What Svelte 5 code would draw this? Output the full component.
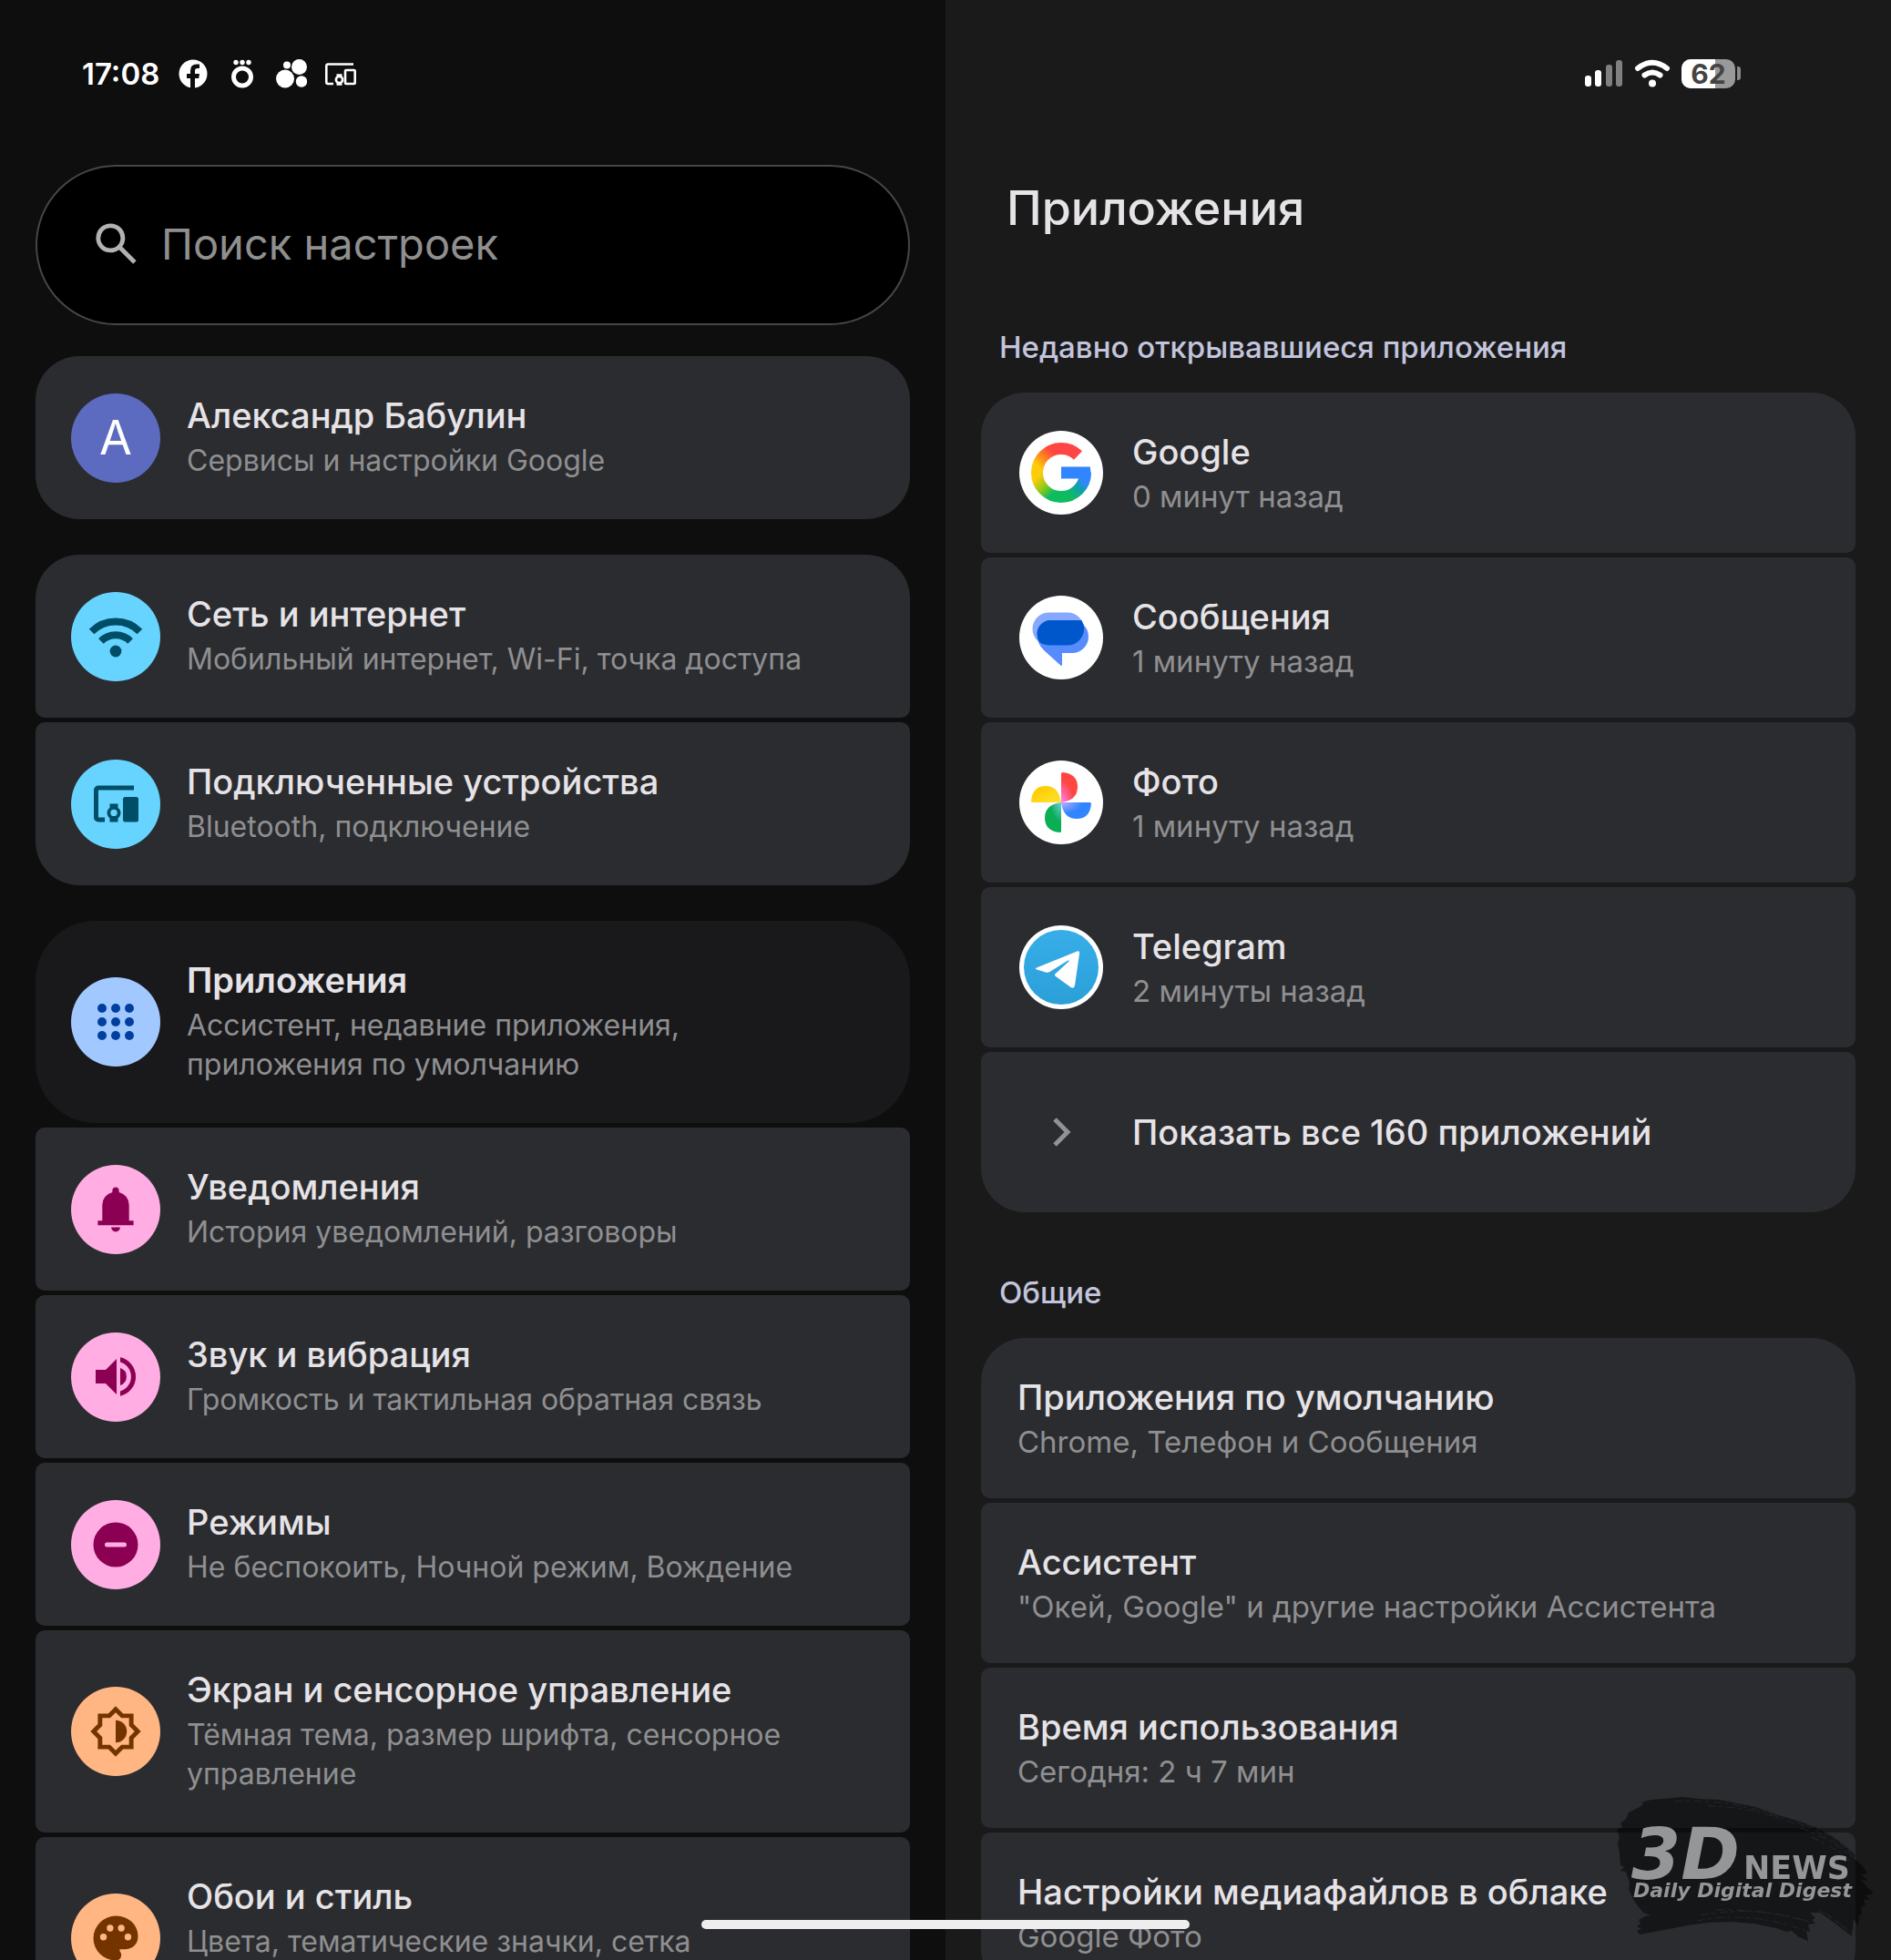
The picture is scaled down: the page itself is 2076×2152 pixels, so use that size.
<script>
  const groups = [
    [{ icon: 'avatar', title: 'Александр Бабулин', sub: 'Сервисы и настройки Google' }],
    [
      { icon: 'wifi', title: 'Сеть и интернет', sub: 'Мобильный интернет, Wi-Fi, точка доступа' },
      { icon: 'devices', title: 'Подключенные устройства', sub: 'Bluetooth, подключение' },
    ],
    [
      { icon: 'apps', title: 'Приложения', sub: 'Ассистент, недавние приложения, приложения по умолчанию', selected: true },
      { icon: 'bell', title: 'Уведомления', sub: 'История уведомлений, разговоры' },
      { icon: 'sound', title: 'Звук и вибрация', sub: 'Громкость и тактильная обратная связь' },
      { icon: 'modes', title: 'Режимы', sub: 'Не беспокоить, Ночной режим, Вождение' },
      { icon: 'display', title: 'Экран и сенсорное управление', sub: 'Тёмная тема, размер шрифта, сенсорное управление' },
      { icon: 'palette', title: 'Обои и стиль', sub: 'Цвета, тематические значки, сетка', tall: true },
    ],
  ]

  const recent = [
    { icon: 'google', title: 'Google', sub: '0 минут назад' },
    { icon: 'messages', title: 'Сообщения', sub: '1 минуту назад' },
    { icon: 'photos', title: 'Фото', sub: '1 минуту назад' },
    { icon: 'telegram', title: 'Telegram', sub: '2 минуты назад' },
  ]

  const general = [
    { title: 'Приложения по умолчанию', sub: 'Chrome, Телефон и Сообщения' },
    { title: 'Ассистент', sub: '"Окей, Google" и другие настройки Ассистента' },
    { title: 'Время использования', sub: 'Сегодня: 2 ч 7 мин' },
    { title: 'Настройки медиафайлов в облаке', sub: 'Google Фото' },
  ]

  const dots = [34, 49, 64]
  const battery = 62

  let query = $state('')
</script>

{#snippet settingIcon(name)}
  <span class="badge {name}">
    {#if name === 'avatar'}
      A
    {:else}
      <svg viewBox="0 0 98 98" aria-hidden="true">
        {#if name === 'wifi'}
          <path d="M22.6 43.5A37.2 37.2 0 0 1 75.4 43.5M32.9 54A22.7 22.7 0 0 1 65.1 54" fill="none" stroke="currentColor" stroke-width="8" />
          <circle cx="49" cy="65" r="6.4" />
        {:else if name === 'devices'}
          <path d="M69 31H30a2.500 2.500 0 0 0-2.500 2.500v30A2.500 2.500 0 0 0 30 66h7" fill="none" stroke="currentColor" stroke-width="5" />
          <rect x="57" y="41" width="17" height="27.500" rx="2.500" />
          <path fill-rule="evenodd" d="M42.500 48.500h9v4.200a7.200 7.200 0 0 1 0 11.600v4.200h-9v-4.200a7.200 7.200 0 0 1 0-11.600zM47 54.700a3.700 3.700 0 1 0 0 7.400 3.700 3.700 0 0 0 0-7.400z" />
        {:else if name === 'apps'}
          {#each dots as cy}
            {#each dots as cx}
              <circle {cx} {cy} r="5" />
            {/each}
          {/each}
        {:else if name === 'bell'}
          <path transform="translate(19.600 19.600) scale(2.450)" d="M4 19v-2h2v-7q0-2.075 1.250-3.687T10.500 4.200v-.7q0-.625.438-1.062T12 2t1.063.438T13.500 3.500v.7q2 .5 3.250 2.113T18 10v7h2v2zm8 3q-.825 0-1.412-.587T10 20h4q0 .825-.587 1.413T12 22" />
        {:else if name === 'sound'}
          <path d="M27 41h11l12-12v39L38 56H27zM54 39a10 10 0 0 1 0 19z" />
          <path d="M54 27.300A21.700 21.700 0 0 1 54 69.700V64.500A16.700 16.700 0 0 0 54 32.500z" />
        {:else if name === 'modes'}
          <path fill-rule="evenodd" d="M49 24.500a24.500 24.500 0 1 0 0 49 24.500 24.500 0 0 0 0-49zM39.500 46.500h19a2.500 2.500 0 0 1 0 5h-19a2.500 2.500 0 0 1 0-5z" />
        {:else if name === 'display'}
          <g transform="translate(19.600 19.600) scale(2.450)">
            <path fill-rule="evenodd" d="M12 23.300 8.650 20H4v-4.650L.7 12 4 8.650V4h4.650L12 .7 15.350 4H20v4.650L23.300 12 20 15.350V20h-4.650zM12 20.500l2.500-2.500H18v-3.500l2.500-2.500L18 9.500V6h-3.500L12 3.500 9.500 6H6v3.500L3.500 12 6 14.500V18h3.500z" />
            <path d="M12 17a5 5 0 0 0 0-10z" />
          </g>
        {:else if name === 'palette'}
          <g transform="translate(19.600 19.600) scale(2.450)">
            <path d="M12 22q-2.050 0-3.875-.788t-3.187-2.150-2.150-3.187T2 12q0-2.075.813-3.900t2.200-3.175T8.250 2.788 12.200 2q2 0 3.775.688t3.113 1.900 2.125 2.875T22 11.050q0 2.875-1.750 4.413T16 17h-1.850q-.225 0-.312.125t-.088.275q0 .3.375.863t.375 1.287q0 1.250-.687 1.850T12 22" />
            <g class="holes">
              <circle cx="6.500" cy="11.500" r="1.500" />
              <circle cx="9.500" cy="7.500" r="1.500" />
              <circle cx="14.500" cy="7.500" r="1.500" />
              <circle cx="17.500" cy="11.500" r="1.500" />
            </g>
          </g>
        {/if}
      </svg>
    {/if}
  </span>
{/snippet}

{#snippet appIcon(name)}
  <svg class="app-icon" viewBox="0 0 92 92" aria-hidden="true">
    {#if name !== 'more'}
      <circle cx="46" cy="46" r="46" fill="#fff" />
    {/if}
    {#if name === 'google'}
      <defs>
        <linearGradient id="g-ry" x1="1" y1="0" x2="0" y2="1">
          <stop offset="0.25" stop-color="#ff4641" />
          <stop offset="0.5" stop-color="#ff7a27" />
          <stop offset="0.85" stop-color="#ffcc0a" />
        </linearGradient>
        <linearGradient id="g-yg" x1="0" y1="0" x2="1" y2="1">
          <stop offset="0.1" stop-color="#ffcc0a" />
          <stop offset="0.45" stop-color="#8fc916" />
          <stop offset="0.75" stop-color="#0ebc5f" />
        </linearGradient>
        <linearGradient id="g-gb" x1="0" y1="1" x2="1" y2="0">
          <stop offset="0.2" stop-color="#0ebc5f" />
          <stop offset="0.55" stop-color="#12a0a8" />
          <stop offset="0.8" stop-color="#3186ff" />
        </linearGradient>
      </defs>
      <g fill="none" stroke-width="13">
        <path d="M46 19.500A26.500 26.500 0 0 0 19.500 46" stroke="url(#g-ry)" />
        <path d="M19.500 46A26.500 26.500 0 0 0 46 72.500" stroke="url(#g-yg)" />
        <path d="M46 72.500A26.500 26.500 0 0 0 72.500 46" stroke="url(#g-gb)" />
        <path d="M64.500 27A26.500 26.500 0 0 0 45.800 19.500" stroke="#ff4647" />
      </g>
      <path d="M46 39.500h31.800q1.600 6.500-.1 13H46z" fill="#3186ff" />
    {:else if name === 'messages'}
      <path d="M32.500 18.500H53a18 18 0 0 1 0 36H32.500a18 18 0 0 1 0-36z" fill="#86a9ff" />
      <path d="M34 27h24a18 18 0 0 1 0 36H47v12.500q0 2.500-2 .8L27 60q-7.500-7-7.500-18A15 15 0 0 1 34 27z" fill="#578cff" />
      <path d="M34 27h34.300A18 18 0 0 1 53 54.500H32.500Q26 54 22 51q-2.500-4-2.500-9A15 15 0 0 1 34 27z" fill="#0057cc" />
    {:else if name === 'photos'}
      <defs>
        <radialGradient id="p-r" cx="0" cy="1" r="1">
          <stop offset="0.1" stop-color="#ff7ae0" />
          <stop offset="0.75" stop-color="#ff4641" />
        </radialGradient>
        <linearGradient id="p-y" x1="0" y1="0" x2="1" y2="1">
          <stop offset="0.2" stop-color="#fc0" />
          <stop offset="1" stop-color="#ffe335" />
        </linearGradient>
        <radialGradient id="p-b" cx="0" cy="0" r="1">
          <stop offset="0.1" stop-color="#a9a8ff" />
          <stop offset="0.7" stop-color="#3186ff" />
        </radialGradient>
        <radialGradient id="p-g" cx="1" cy="0" r="1">
          <stop offset="0.1" stop-color="#63c9cf" />
          <stop offset="0.65" stop-color="#0aae54" />
        </radialGradient>
      </defs>
      <path d="M46 46V14.500q0-1.500 1.500-1.500Q64 14.500 64 29T46 46z" fill="url(#p-r)" />
      <path d="M46 46H14.500q-1.500 0-1.500-1.500Q14.500 28 29 28T46 46z" fill="url(#p-y)" />
      <path d="M46 46h31.500q1.500 0 1.500 1.500Q77.500 64 63 64T46 46z" fill="url(#p-b)" />
      <path d="M46 46v31.500q0 1.500-1.500 1.500Q28 77.500 28 63T46 46z" fill="url(#p-g)" />
    {:else if name === 'telegram'}
      <defs>
        <linearGradient id="t-b" x1="0" y1="0" x2="0" y2="1">
          <stop offset="0" stop-color="#38aee9" />
          <stop offset="1" stop-color="#2a9fd8" />
        </linearGradient>
      </defs>
      <circle cx="46" cy="46" r="41" fill="url(#t-b)" />
      <path d="M19 46.500 63.500 28.500q3-1 2.500 2.500L61 66q-1 4-4.500 2L40 56q-2-1.500-.2-3L54.500 39.500q.8-1.700-1.500-.8L33.500 51q-2 1.200-4.500.5L19 48.500q-2-1 0-2z" fill="#fff" />
    {:else}
      <path d="M39 32l14 14-14 14" fill="none" stroke="#929294" stroke-width="5" />
    {/if}
  </svg>
{/snippet}

{#snippet labels(item)}
  <span class="text">
    <span class="title">{item.title}</span>
    {#if item.sub}<span class="sub">{item.sub}</span>{/if}
  </span>
{/snippet}

<main class="screen">
  <section class="pane list-pane">
    <div class="status">
      <span class="time">17:08</span>
      <svg class="status-icon" viewBox="0 0 34 34" aria-hidden="true">
        <circle cx="17" cy="17" r="15.500" fill="#fff" />
        <path d="M14 34V22h-4v-5h4v-3.500q0-7 7-7h3V11h-2.200q-2.800 0-2.800 2.800V17h5l-.8 5H19v12z" fill="#0e0e0e" />
      </svg>
      <svg class="status-icon" viewBox="0 0 34 34" fill="#fff" aria-hidden="true">
        <circle cx="17" cy="20.500" r="9.500" fill="none" stroke="#fff" stroke-width="5" />
        <circle cx="10" cy="4.500" r="2.700" />
        <circle cx="17" cy="4.500" r="2.700" />
        <circle cx="24" cy="4.500" r="2.700" />
      </svg>
      <svg class="status-icon" viewBox="0 0 34 34" fill="#fff" aria-hidden="true">
        <circle cx="10" cy="22.500" r="10" />
        <circle cx="25.500" cy="9.500" r="8.500" />
        <circle cx="12" cy="7.500" r="4" />
        <circle cx="28" cy="25.500" r="6.200" />
      </svg>
      <svg class="status-icon" viewBox="0 0 34 34" fill="none" stroke="#fff" stroke-width="2.600" aria-hidden="true">
        <path d="M31 6.500H3Q1.300 6.500 1.300 8.500V26q0 2 1.700 2h6" />
        <rect x="22" y="13" width="10.700" height="15" rx="1" />
        <circle cx="15.500" cy="23.500" r="3.600" />
        <path d="M12.500 18.500h6M12.500 28.500h6" />
      </svg>
    </div>

    <label class="search">
      <svg viewBox="0 0 24 24" aria-hidden="true">
        <path d="m19.600 21-6.300-6.300q-.75.6-1.725.95T9.500 16q-2.725 0-4.612-1.888T3 9.500t1.888-4.612T9.500 3t4.613 1.888T16 9.500q0 1.100-.35 2.075T14.700 13.300l6.300 6.300zM9.500 14q1.875 0 3.188-1.312T14 9.500t-1.312-3.187T9.500 5 6.313 6.313 5 9.500t1.313 3.188T9.500 14" />
      </svg>
      <input type="text" placeholder="Поиск настроек" aria-label="Поиск настроек" bind:value={query} />
    </label>

    <nav class="groups">
      {#each groups as group}
        <div class="group">
          {#each group as item}
            <button class="row" class:selected={item.selected} class:tall={item.tall} aria-current={item.selected ? 'page' : undefined}>
              {@render settingIcon(item.icon)}
              {@render labels(item)}
            </button>
          {/each}
        </div>
      {/each}
    </nav>
  </section>

  <section class="pane detail-pane">
    <div class="status end">
      <svg class="signal" viewBox="0 0 42 34" aria-hidden="true">
        <g fill="#fff">
          <rect x="0" y="19" width="7" height="12" rx="3" />
          <rect x="11" y="13" width="7" height="18" rx="3" />
        </g>
        <g fill="#808080">
          <rect x="23" y="7" width="7" height="24" rx="3" />
          <rect x="34" y="2" width="7" height="29" rx="3" />
        </g>
      </svg>
      <svg class="wifi-status" viewBox="0 0 40 34" aria-hidden="true">
        <path d="M4 11Q20-1.500 36 11M11.500 18.500q8.500-6 17 0" fill="none" stroke="#fff" stroke-width="6" stroke-linecap="round" />
        <circle cx="20" cy="27.500" r="4" fill="#fff" />
      </svg>
      <span class="battery">
        <span class="charge" style="width:{battery}%"></span>
        <span class="level">{battery}</span>
      </span>
      <span class="nub"></span>
    </div>

    <h1>Приложения</h1>

    <h2>Недавно открывавшиеся приложения</h2>
    <div class="group">
      {#each recent as item}
        <button class="row">
          {@render appIcon(item.icon)}
          {@render labels(item)}
        </button>
      {/each}
      <button class="row">
        {@render appIcon('more')}
        {@render labels({ title: 'Показать все 160 приложений' })}
      </button>
    </div>

    <h2>Общие</h2>
    <div class="group">
      {#each general as item}
        <button class="row">{@render labels(item)}</button>
      {/each}
    </div>
  </section>

  <div class="home-bar"></div>

  <svg class="watermark" viewBox="0 0 284 160" role="img" aria-label="3DNEWS Daily Digital Digest">
    <path class="brush" d="M25 11 30 7 26 6 38 3 50 2 72 0 90 2 112 3 152 11 174 19 198 26 218 33 235 42 250 53 262 64 260 67 270 76 275 84 268 85 276 92 268 91 275 99 282 106 273 108 278 113 271 112 273 119 268 121 269 129 266 130 265 142 260 134 258 153 240 139 223 127 212 127 218 133 214 135 218 139 210 140 212 148 208 147 210 158 200 154 192 147 186 148 175 144 150 139 125 137 100 138 78 141 52 146 25 151 22 147 27 145 22 142 26 139 24 135 31 131 37 130 29 127 20 116 16 108 13 101 14 94 10 82 4 81 8 77 4 75 3 62 1 51 3 44 0 36 6 33 4 29 10 24 13 17z" />
    <g class="streaks">
      <path d="M198 28q36 14 62 38M208 30q34 13 54 36M202 34q30 10 56 32M214 44q24 10 44 28" />
      <path d="M92 130q60-12 122 8M88 136q60-12 122 12M110 124q50-2 104 14M222 124l36 24M230 128l28 22" />
      <path d="M64 5q70-4 130 24M100 10q40 0 80 14" />
    </g>
    <text class="big" x="16" y="90">3D</text>
    <text class="news" x="139" y="90">NEWS</text>
    <text class="tagline" x="18" y="110">Daily Digital Digest</text>
  </svg>
</main>

<style>
  :global(body) { background: #0e0e0e; }

  .screen {
    position: relative;
    display: grid;
    grid-template-columns: 1fr 1fr;
    height: 100vh;
    overflow: hidden;
    font-family: Inter, Roboto, sans-serif;
    color: #e6e3e7;
  }

  .pane { box-sizing: border-box; min-width: 0; padding: 0 39px; overflow-y: auto; scrollbar-width: none; }
  .list-pane { background: #0e0e0e; }
  .detail-pane { background: #1a1a1b; }

  .status {
    display: flex;
    align-items: center;
    gap: 20px;
    box-sizing: border-box;
    height: 181px;
    padding: 0 51px 20px;
    color: #fff;
  }
  .time { font-size: 33px; font-weight: 600; }
  .status-icon { width: 34px; height: 34px; }
  .end { justify-content: flex-end; gap: 12px; padding-right: 126px; }
  .signal { width: 42px; height: 34px; }
  .wifi-status { width: 40px; height: 34px; }
  .battery {
    position: relative;
    width: 59px;
    height: 32px;
    border-radius: 10px;
    background: #999;
  }
  .charge { position: absolute; inset: 0 auto 0 0; border-radius: 10px 0 0 10px; background: #fff; }
  .level {
    position: relative;
    display: block;
    font-size: 30px;
    font-weight: 700;
    line-height: 32px;
    text-align: center;
    color: #444;
  }
  .nub { width: 4px; height: 15px; margin-left: -10px; border-radius: 0 3px 3px 0; background: #8a8a8a; }

  .search {
    display: flex;
    align-items: center;
    gap: 20px;
    box-sizing: border-box;
    height: 176px;
    margin-bottom: 34px;
    padding: 0 57px 4px;
    border: 2px solid #464646;
    border-radius: 88px;
    background: #000;
  }
  .search svg { flex: none; width: 59px; height: 59px; fill: #b2b2b2; }
  .search input {
    flex: 1;
    min-width: 0;
    padding: 0;
    border: 0;
    outline: 0;
    background: none;
    font: 47px Inter, Roboto, sans-serif;
    color: #e6e3e7;
  }
  .search input::placeholder { color: #8f8f8f; opacity: 1; }

  .groups { display: flex; flex-direction: column; gap: 39px; }
  .group { display: flex; flex-direction: column; gap: 5px; }

  .row {
    display: flex;
    align-items: center;
    gap: 30px;
    width: 100%;
    min-height: 176px;
    padding: 0 40px;
    border: 0;
    border-radius: 10px;
    background: #2b2c2f;
    font: inherit;
    color: inherit;
    text-align: left;
  }
  .list-pane .row { gap: 29px; padding: 0 72px 0 39px; }
  .row:first-child { border-top-left-radius: 48px; border-top-right-radius: 48px; }
  .row:last-child { border-bottom-left-radius: 48px; border-bottom-right-radius: 48px; }
  .row.selected { border-radius: 66px; background: #19191b; }

  .text { flex: 1; min-width: 0; }
  .text:has(.sub) { padding: 40px 0; }
  .list-pane .text { padding-bottom: 43px; }
  .list-pane .tall .text { padding-bottom: 86px; }
  .title { display: block; font-size: 38px; font-weight: 500; line-height: 51px; }
  .selected .title { font-weight: 600; }
  .sub { display: block; margin-top: 2px; font-size: 33px; line-height: 43px; color: #8f8f91; }
  .list-pane .sub { font-size: 32px; }

  .badge {
    display: grid;
    place-items: center;
    flex: none;
    width: 98px;
    height: 98px;
    border-radius: 50%;
    background: #ffade3;
    color: #8c0053;
  }
  .badge svg { width: 98px; height: 98px; fill: currentColor; }
  .avatar { background: #5c6bc0; color: #fff; font-size: 52px; }
  .wifi, .devices { background: #67d4ff; color: #004d67; }
  .apps { background: #a1c9ff; color: #003f9f; }
  .display, .palette { background: #ffb683; color: #743400; }
  .holes { fill: #ffb683; }

  .app-icon { flex: none; width: 92px; height: 92px; margin: 0 2px; }

  h1 { margin: 0; padding: 16px 28px 32px; font-size: 52px; font-weight: 500; line-height: 64px; }
  h2 {
    margin: 66px 0 28px;
    padding: 0 20px;
    font-size: 33px;
    font-weight: 500;
    line-height: 44px;
    color: #c3c5dc;
  }

  .home-bar {
    position: absolute;
    bottom: 34px;
    left: 50%;
    width: 536px;
    height: 10px;
    border-radius: 5px;
    background: #eee;
    transform: translateX(-50%);
  }

  .watermark { position: absolute; right: 17px; bottom: 19px; width: 284px; height: 160px; pointer-events: none; }
  .brush { fill: #000; opacity: .5; }
  .streaks { fill: none; stroke: #2b2c2f; stroke-width: 1; stroke-dasharray: 9 3 4 5; opacity: .8; }
  .watermark text { fill: #959698; font-family: "DejaVu Sans", sans-serif; font-weight: 700; }
  .big { font-size: 78px; font-style: italic; }
  .news { font-size: 35px; }
  .tagline { font-size: 22px; font-style: italic; }
</style>
